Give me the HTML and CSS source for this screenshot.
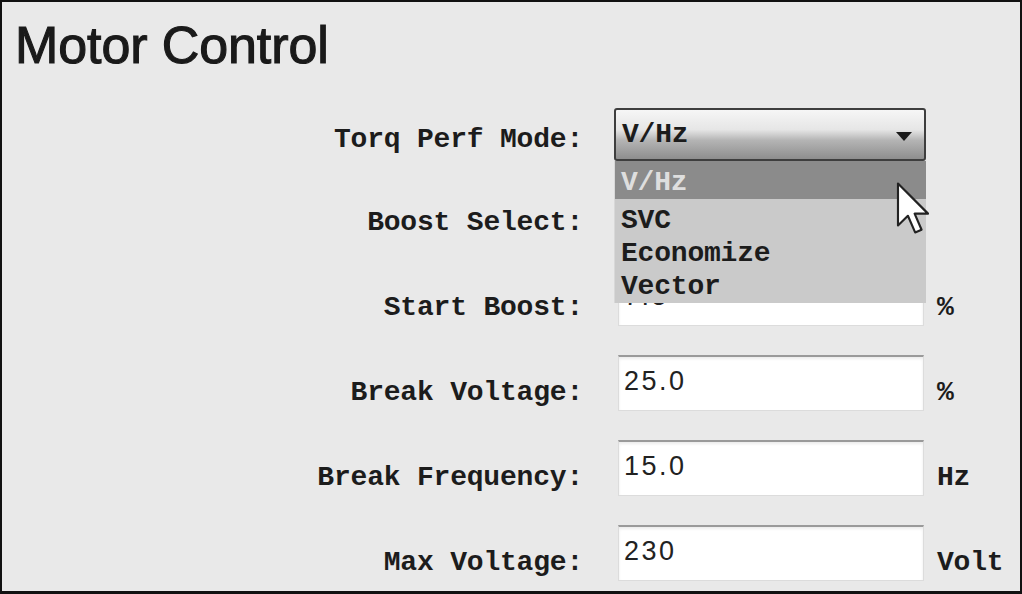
FILE: index.html
```html
<!DOCTYPE html>
<html lang="en">
<head>
    <meta charset="UTF-8">
    <title>Motor Control</title>
    <link rel="stylesheet" href="styles.css">
</head>
<body>
    <div class="frame">
        <h1 class="title">Motor Control</h1>

        <div class="form">
            <div class="label first">Torq Perf Mode:</div>
            <div class="field">
                <div class="select open">
                    <span>V/Hz</span>
                    <span class="arrow"></span>
                </div>
                <ul class="options">
                    <li class="active">V/Hz</li>
                    <li>SVC</li>
                    <li>Economize</li>
                    <li>Vector</li>
                </ul>
                <svg class="cursor" width="34" height="52" viewBox="0 0 12.4 19.4">
                    <path d="M0.6 0.6 L0.6 16.2 L4.3 12.6 L7 18.8 L9.4 17.8 L6.8 11.8 L11.8 11.8 Z" fill="#ffffff" stroke="#222" stroke-width="0.8" stroke-linejoin="round"/>
                </svg>
            </div>
            <div class="unit"></div>

            <div class="label">Boost Select:</div>
            <div class="field">
                <!-- hidden under the open list -->
                <div class="select"><span></span><span class="arrow"></span></div>
            </div>
            <div class="unit"></div>

            <div class="label">Start Boost:</div>
            <div class="field"><div class="input">7.5</div></div>
            <div class="unit">%</div>

            <div class="label">Break Voltage:</div>
            <div class="field"><div class="input">25.0</div></div>
            <div class="unit">%</div>

            <div class="label">Break Frequency:</div>
            <div class="field"><div class="input">15.0</div></div>
            <div class="unit">Hz</div>

            <div class="label">Max Voltage:</div>
            <div class="field"><div class="input">230</div></div>
            <div class="unit">Volt</div>
        </div>
    </div>
</body>
</html>
```

FILE: styles.css
```css
html, body {
    margin: 0;
    padding: 0;
    background: #e9e9e9;
}
.frame {
    width: 1022px;
    height: 594px;
    box-sizing: border-box;
    border: 2px solid #111;
    border-bottom-width: 3px;
    background: #e9e9e9;
    overflow: hidden;
}
.title {
    margin: 13px 0 0 13px;
    font-family: "Liberation Sans", Arial, sans-serif;
    font-weight: normal;
    font-size: 52px;
    line-height: 60px;
    letter-spacing: -0.1px;
    color: #1a1a1a;
    -webkit-text-stroke: 1.1px #1a1a1a;
}
.form {
    display: grid;
    grid-template-columns: 581px 306px auto;
    grid-auto-rows: 85px;
    column-gap: 35px;
    margin-top: 25px;
}
.form .unit {
    margin-left: -22px;
}
.label, .unit, .select, .options {
    font-family: "Liberation Mono", "Courier New", monospace;
    font-weight: bold;
    font-size: 28px;
    letter-spacing: -0.2px;
    color: #1c1c1c;
}
.label {
    text-align: right;
    padding-top: 23px;
    line-height: 30px;
}
.label.first {
    padding-top: 25px;
}
.unit {
    padding-top: 23px;
    line-height: 30px;
}
.field {
    position: relative;
}
.input {
    height: 56px;
    box-sizing: border-box;
    background: #fff;
    border: 1px solid #dcdcdc;
    border-top: 2px solid #9a9a9a;
    padding: 9px 0 0 5px;
    font-family: "Liberation Sans", Arial, sans-serif;
    font-size: 27px;
    line-height: 30px;
    letter-spacing: 2.5px;
    color: #222;
    box-shadow: inset 0 2px 3px rgba(0, 0, 0, 0.08);
}
.select {
    display: flex;
    align-items: center;
    justify-content: space-between;
    margin: 8px 0 0 -4px;
    width: 312px;
    height: 53px;
    box-sizing: border-box;
    border: 2px solid #3e3e3e;
    border-radius: 3px;
    padding: 0 12px 0 6px;
    background: linear-gradient(#f6f6f6 0%, #e6e6e6 40%, #b4b4b4 62%, #8e8e8e 100%);
    line-height: 30px;
}
.arrow {
    width: 0;
    height: 0;
    border-left: 8px solid transparent;
    border-right: 8px solid transparent;
    border-top: 9px solid #1a1a1a;
    margin-top: 4px;
}
.options {
    position: absolute;
    top: 61px;
    left: -4px;
    width: 312px;
    height: 142px;
    margin: 0;
    padding: 0;
    list-style: none;
    background: #cacaca;
    border-left: 1px solid #d8d8d8;
    box-sizing: border-box;
    z-index: 2;
}
.options li {
    height: 33px;
    line-height: 33px;
    padding-left: 6px;
}
.options li.active {
    height: 38px;
    line-height: 44px;
    margin-bottom: 5px;
    background: #8b8b8b;
    color: #dedede;
}
.cursor {
    position: absolute;
    top: 82px;
    left: 278px;
    z-index: 3;
}
```
